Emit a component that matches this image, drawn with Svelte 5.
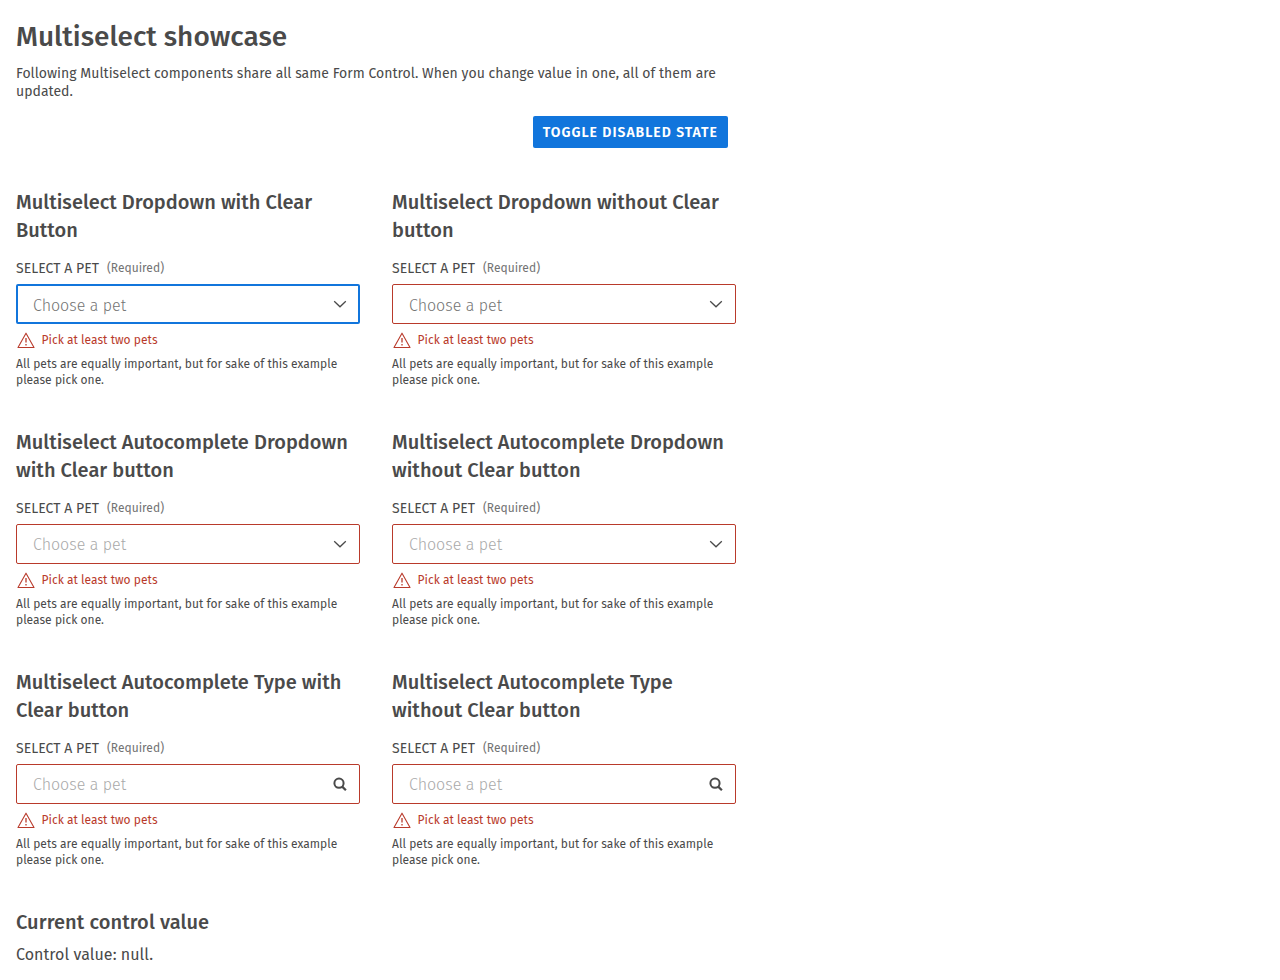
<script>
  let disabled = $state(false);

  const fields = [
    { title: 'Multiselect Dropdown with Clear Button', icon: 'chevron', focused: true },
    { title: 'Multiselect Dropdown without Clear button', icon: 'chevron' },
    { title: 'Multiselect Autocomplete Dropdown with Clear button', icon: 'chevron', typed: true },
    { title: 'Multiselect Autocomplete Dropdown without Clear button', icon: 'chevron', typed: true },
    { title: 'Multiselect Autocomplete Type with Clear button', icon: 'search', typed: true },
    { title: 'Multiselect Autocomplete Type without Clear button', icon: 'search', typed: true }
  ];
</script>

<main>
  <h1>Multiselect showcase</h1>
  <p class="intro">Following Multiselect components share all same Form Control. When you change value in one, all of them are updated.</p>
  <div class="actions">
    <button class="toggle" onclick={() => (disabled = !disabled)}>Toggle disabled state</button>
  </div>

  <div class="grid">
    {#each fields as field}
      <section>
        <h2>{field.title}</h2>
        <div class="label"><span>Select a pet</span><small>(Required)</small></div>
        <div class="control" class:focused={field.focused} class:typed={field.typed} class:disabled>
          <span class="placeholder">Choose a pet</span>
          {#if field.icon === 'chevron'}
            <svg width="16" height="16" viewBox="0 0 16 16" fill="none" stroke="#4a4a4a" stroke-width="1.3">
              <path d="M2.2 5.2 8 10.8l5.8-5.6" />
            </svg>
          {:else}
            <svg width="16" height="16" viewBox="0 0 16 16" fill="none" stroke="#4a4a4a">
              <circle cx="7" cy="7.2" r="4.6" stroke-width="2" />
              <path d="m10.2 10.6 3.7 3.7" stroke-width="2.2" />
            </svg>
          {/if}
        </div>
        <div class="error">
          <svg width="20" height="20" viewBox="0 0 20 20" fill="none" stroke="#b93a2b" stroke-linejoin="round">
            <path d="M10 3.2 18 17.5H2z" stroke-width="1.1" />
            <path d="M10 8v4.6M10 14v1.4" stroke-width="1.3" />
          </svg>
          <span>Pick at least two pets</span>
        </div>
        <p class="hint">All pets are equally important, but for sake of this example please pick one.</p>
      </section>
    {/each}
  </div>

  <h2 class="current">Current control value</h2>
  <p class="value">Control value: null.</p>
</main>

<style>
  :global(body) {
    background: #fff;
  }
  main {
    box-sizing: border-box;
    width: 752px;
    padding: 17px 16px 16px;
    color: #4a4a4a;
    font-family: 'Fira Sans', 'Noto Sans', sans-serif;
  }
  h1, h2, p {
    margin: 0;
  }
  h1 {
    font-size: 28px;
    line-height: 40px;
    font-weight: 500;
  }
  .intro {
    margin-top: 8px;
    font-size: 14px;
    line-height: 18px;
    letter-spacing: 0.028px;
  }
  .actions {
    display: flex;
    justify-content: flex-end;
    padding: 15px 8px 40px 0;
  }
  .toggle {
    box-sizing: border-box;
    height: 32px;
    padding: 2px 10px 0;
    border: 0;
    border-radius: 2px;
    background: #1175dc;
    color: #fff;
    font: 600 14px/30px 'Fira Sans', 'Noto Sans', sans-serif;
    letter-spacing: 1px;
    text-transform: uppercase;
  }
  .grid {
    display: grid;
    grid-template-columns: 344px 344px;
    gap: 40px 32px;
    margin-bottom: 40px;
  }
  h2 {
    font-size: 20px;
    line-height: 28px;
    font-weight: 500;
    letter-spacing: 0.025px;
  }
  .current {
    letter-spacing: 0.08px;
  }
  .label {
    display: flex;
    align-items: center;
    gap: 8px;
    height: 16px;
    margin: 16px 0 8px;
    font-size: 14px;
    line-height: 16px;
    letter-spacing: 0.02px;
    text-transform: uppercase;
  }
  .label span {
    padding-top: 2px;
  }
  .label small {
    color: #737373;
    font-size: 12px;
    text-transform: none;
  }
  .control {
    display: flex;
    align-items: center;
    justify-content: space-between;
    box-sizing: border-box;
    height: 40px;
    padding: 0 11px 0 16px;
    border: 1px solid #b93a2b;
    border-radius: 2px;
  }
  .control.focused {
    padding: 0 10px 0 15px;
    border: 2px solid #1175dc;
  }
  .control.disabled {
    opacity: 0.5;
  }
  .placeholder {
    padding-top: 4px;
    color: #737373;
    font-size: 16px;
    line-height: 24px;
    font-weight: 300;
  }
  .typed .placeholder {
    padding-top: 2px;
    color: #a9a9a9;
  }
  svg {
    flex: none;
  }
  .error {
    display: flex;
    align-items: center;
    gap: 5.5px;
    height: 16px;
    margin: 8px 0;
    color: #b93a2b;
    font-size: 12px;
    line-height: 16px;
    letter-spacing: 0.02px;
  }
  .hint {
    font-size: 12px;
    line-height: 16px;
    letter-spacing: 0.02px;
  }
  .value {
    margin-top: 7px;
    font-size: 16px;
    line-height: 24px;
    letter-spacing: 0.05px;
  }
</style>
